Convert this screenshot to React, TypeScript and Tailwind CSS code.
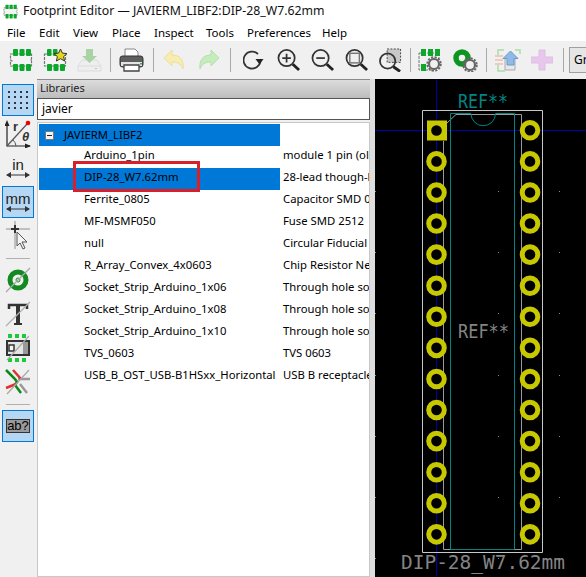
import type { ReactNode } from 'react'

const rows = [
  { name: 'Arduino_1pin', desc: 'module 1 pin (ols)' },
  { name: 'DIP-28_W7.62mm', desc: '28-lead though-hole mounted', selected: true },
  { name: 'Ferrite_0805', desc: 'Capacitor SMD 0805, reflow' },
  { name: 'MF-MSMF050', desc: 'Fuse SMD 2512' },
  { name: 'null', desc: 'Circular Fiducial' },
  { name: 'R_Array_Convex_4x0603', desc: 'Chip Resistor Network' },
  { name: 'Socket_Strip_Arduino_1x06', desc: 'Through hole socket' },
  { name: 'Socket_Strip_Arduino_1x08', desc: 'Through hole socket' },
  { name: 'Socket_Strip_Arduino_1x10', desc: 'Through hole socket' },
  { name: 'TVS_0603', desc: 'TVS 0603' },
  { name: 'USB_B_OST_USB-B1HSxx_Horizontal', desc: 'USB B receptacle' },
]

const menus = [
  { label: 'File', width: 'w-[32px]' },
  { label: 'Edit', width: 'w-[34px]' },
  { label: 'View', width: 'w-[39px]' },
  { label: 'Place', width: 'w-[42px]' },
  { label: 'Inspect', width: 'w-[52px]' },
  { label: 'Tools', width: 'w-[41px]' },
  { label: 'Preferences', width: 'w-[75px]' },
  { label: 'Help', width: 'w-[30px]' },
]

function Chip({ size = 24 }: { size?: number }) {
  return (
    <svg width={size} height={size} viewBox="0 0 24 24" className="block">
      <path d="M1.500 6h21v5l-1 1 1 1v5h-21v-4l1.500-1-1.500-1z" fill="#f4f4f4" stroke="#777" strokeWidth="1.200" strokeDasharray="3 1" />
      {[4, 10.500, 17].map(x => (
        <g key={x}>
          <rect x={x} y="1" width="5" height="7" rx="1" fill="#0ba82c" />
          <rect x={x} y="16" width="5" height="7" rx="1" fill="#0ba82c" />
        </g>
      ))}
    </svg>
  )
}

function Gear({ x, y }: { x: number; y: number }) {
  return (
    <g transform={`translate(${x} ${y})`}>
      <circle r="5" fill="#f0f0f0" stroke="#666" strokeWidth="2.200" />
      <circle r="6.800" fill="none" stroke="#666" strokeWidth="1.800" strokeDasharray="2.200 1.400" />
      <circle r="2" fill="#f0f0f0" />
    </g>
  )
}

function Magnifier({ children }: { children?: ReactNode }) {
  return (
    <svg width="23" height="24" viewBox="0 0 24 24" fill="none" className="block">
      <circle cx="10" cy="10" r="8.500" stroke="#333" strokeWidth="1.800" />
      <path d="M16.500 16.500L23 22.500" stroke="#222" strokeWidth="3" />
      {children}
    </svg>
  )
}

function TopToolbar() {
  return (
    <div className="h-[38px] bg-[#f0f0f0] flex items-center pl-[9px] shrink-0 overflow-hidden">
      <div className="w-[24px] shrink-0"><Chip /></div>
      <div className="w-[24px] shrink-0 ml-[10px]">
        <svg width="24" height="24" viewBox="0 0 24 24" className="block">
          <path d="M1.500 6h21v12h-21z" fill="#f4f4f4" stroke="#777" strokeWidth="1.200" strokeDasharray="3 1" />
          {[4, 10.500, 17].map(x => <rect key={x} x={x} y="16" width="5" height="7" rx="1" fill="#0ba82c" />)}
          {[4, 10].map(x => <rect key={x} x={x} y="1" width="4.500" height="7" rx="1" fill="#0ba82c" />)}
          <path d="M17.500 1l1.900 4.100 4.600.5-3.400 3 1 4.400-4.100-2.300-4.100 2.300 1-4.400-3.400-3 4.600-.5z" fill="#e5d81a" stroke="#333" strokeWidth="1" />
        </svg>
      </div>
      <div className="w-[25px] shrink-0 ml-[10px]">
        <svg width="25" height="24" viewBox="0 0 25 24" className="block">
          <path d="M5 12h15l4 6v5H1v-5z" fill="#eeeeee" stroke="#dcdcdc" />
          <path d="M1 18h23" stroke="#dcdcdc" />
          <path d="M9 1h7v7h4l-7.500 7L5 8h4z" fill="#a9d3a5" />
          <rect x="18" y="20" width="2" height="1" fill="#a9d3a5" />
        </svg>
      </div>
      <div className="w-px h-[24px] bg-[#a8a8a8] ml-[8px] shrink-0" />
      <div className="w-[24px] shrink-0 ml-[8px]">
        <svg width="25" height="24" viewBox="0 0 25 24" className="block">
          <path d="M6 10V1h10l3 3v6z" fill="#fff" stroke="#888" />
          <rect x="1" y="8" width="23" height="11" rx="2.500" fill="#5e5e5e" stroke="#333" />
          <rect x="2" y="14" width="21" height="4" fill="#e4e4e4" />
          <path d="M5 17h15v6H5z" fill="#fff" stroke="#444" strokeWidth="1.300" />
          <rect x="21" y="15" width="2" height="1.500" fill="#2cb34a" />
        </svg>
      </div>
      <div className="w-px h-[24px] bg-[#a8a8a8] ml-[10px] shrink-0" />
      <div className="w-[22px] shrink-0 ml-[9px]">
        <svg width="22" height="24" viewBox="0 0 22 24" className="block">
          <path d="M1 10l8-8v5c8 0 12 5 11 14-2-5-5-7-11-7v4z" fill="#f7edb0" stroke="#eadf9c" />
        </svg>
      </div>
      <div className="w-[22px] shrink-0 ml-[13px]">
        <svg width="22" height="24" viewBox="0 0 22 24" className="block">
          <path d="M21 10l-8-8v5C5 7 1 12 2 21c2-5 5-7 11-7v4z" fill="#c5ecbc" stroke="#b5e0ac" />
        </svg>
      </div>
      <div className="w-px h-[24px] bg-[#a8a8a8] ml-[10px] shrink-0" />
      <div className="w-[20px] shrink-0 ml-[12px]">
        <svg width="21" height="22" viewBox="0 0 21 22" fill="none" className="block">
          <path d="M15 5a8.500 8.500 0 1 0 2.500 7" stroke="#333" strokeWidth="1.800" />
          <path d="M12.500 10h8l-4 5.500z" fill="#222" />
        </svg>
      </div>
      <div className="w-[23px] shrink-0 ml-[14px]">
        <Magnifier><path d="M5.500 10h9M10 5.500v9" stroke="#333" strokeWidth="1.800" /></Magnifier>
      </div>
      <div className="w-[23px] shrink-0 ml-[11px]">
        <Magnifier><path d="M5.500 10h9" stroke="#333" strokeWidth="1.800" /></Magnifier>
      </div>
      <div className="w-[23px] shrink-0 ml-[11px]">
        <Magnifier><rect x="5" y="5" width="10" height="10" stroke="#777" strokeWidth="1.500" /></Magnifier>
      </div>
      <div className="w-[23px] shrink-0 ml-[11px]">
        <svg width="23" height="24" viewBox="0 0 24 24" fill="none" className="block">
          <rect x="8.500" y="0.500" width="14" height="14" fill="#c8c8c8" stroke="#444" strokeDasharray="2 1.500" />
          <circle cx="9" cy="13" r="8" stroke="#333" strokeWidth="1.800" />
          <path d="M15 19l7 5" stroke="#222" strokeWidth="3" />
        </svg>
      </div>
      <div className="w-px h-[24px] bg-[#a8a8a8] ml-[8px] shrink-0" />
      <div className="w-[25px] shrink-0 ml-[7px]">
        <svg width="25" height="24" viewBox="0 0 25 24" className="block">
          <path d="M1 5h20v7H16v10H1z" fill="#f0f0f0" stroke="#777" strokeDasharray="3 1" />
          <rect x="3" y="1" width="5" height="7" fill="#0ba82c" />
          <rect x="10" y="1" width="5" height="7" fill="#0ba82c" />
          <rect x="17" y="1" width="5" height="7" fill="#0ba82c" />
          <rect x="3" y="16" width="5" height="7" fill="#0ba82c" />
          <Gear x={16} y={16} />
        </svg>
      </div>
      <div className="w-[25px] shrink-0 ml-[10px]">
        <svg width="25" height="24" viewBox="0 0 25 24" className="block">
          <circle cx="9" cy="10" r="6" fill="none" stroke="#0c961f" strokeWidth="5.500" />
          <Gear x={17} y={17} />
        </svg>
      </div>
      <div className="w-px h-[24px] bg-[#a8a8a8] ml-[8px] shrink-0" />
      <div className="w-[26px] shrink-0 ml-[8px]">
        <svg width="26" height="24" viewBox="0 0 26 24" fill="none" className="block">
          <path d="M3 7V2h6M20 2h5v4M3 17v6h7" stroke="#a8dca8" strokeWidth="1.500" />
          <path d="M0 8h8M0 12h8M0 16h8" stroke="#eca58f" strokeWidth="1.200" />
          <path d="M10 10h10v12H10z" fill="#e8e8e8" stroke="#aaa" />
          <path d="M15.500 3l7.500 7.500h-4v6.500h-7v-6.500H8z" fill="#8fb9e6" stroke="#6a9bd0" />
        </svg>
      </div>
      <div className="w-[22px] shrink-0 ml-[10px]">
        <svg width="22" height="24" viewBox="0 0 22 24" className="block">
          <path d="M8 2h6v7h8v6h-8v7H8v-7H0V9h8z" fill="#e7c8ec" stroke="#dcbfe2" />
        </svg>
      </div>
      <div className="w-px h-[24px] bg-[#a8a8a8] ml-[10px] shrink-0" />
      <div className="ml-[5px] h-[26px] w-[40px] border border-[#a0a0a0] bg-[#e6e6e6] pl-[4px] text-[12px] leading-[24px] text-black shrink-0">Gr</div>
    </div>
  )
}

function Arrow() {
  return (
    <svg width="24" height="6" viewBox="0 0 24 6" className="block">
      <path d="M1 3h22" stroke="#333" />
      <path d="M0 3l5-3v6zM24 3l-5-3v6z" fill="#333" />
    </svg>
  )
}

function LeftToolbar() {
  const btn = 'w-[32px] h-[32px] flex items-center justify-center border border-transparent shrink-0'
  const on = 'w-[32px] h-[32px] flex items-center justify-center border border-[#0078d7] bg-[#b5d7f3] shrink-0'
  return (
    <div className="w-[37px] shrink-0 bg-[#f0f0f0] flex flex-col items-center gap-[2px] pt-[5px] pr-[1px]">
      <div className={on}>
        <svg width="22" height="22" viewBox="0 0 22 22">
          {[2, 8, 14, 20].map(x => [3, 8, 14, 19].map(y => <rect key={`${x}-${y}`} x={x - 1} y={y - 1} width="2" height="2" fill="#334" />))}
        </svg>
      </div>
      <div className={btn}>
        <svg width="26" height="28" viewBox="0 0 26 28" fill="none">
          <path d="M2 3v23h23" stroke="#222" strokeWidth="1.200" />
          <path d="M2 0l-2.500 6h5zM26 26l-6-2.500v5z" fill="#222" />
          <path d="M2 26L22 4" stroke="#555" strokeWidth="1.200" />
          <path d="M11 26a9 9 0 0 0-3-6" stroke="#555" />
          <circle cx="23" cy="3" r="2.300" fill="#f00000" />
          <text x="8" y="11" fontFamily="Liberation Sans, sans-serif" fontSize="13" fontWeight="700" fill="#333">r</text>
          <text x="17" y="21" fontFamily="Liberation Sans, sans-serif" fontSize="13" fontWeight="700" fontStyle="italic" fill="#333">θ</text>
        </svg>
      </div>
      <div className={`${btn} flex-col`}>
        <span className="text-[15px] leading-[15px] text-[#222] font-['Liberation_Sans',sans-serif] mt-[-2px]">in</span>
        <Arrow />
      </div>
      <div className={`${on} flex-col`}>
        <span className="text-[15px] leading-[15px] text-[#222] font-['Liberation_Sans',sans-serif] mt-[-2px]">mm</span>
        <Arrow />
      </div>
      <div className={btn}>
        <svg width="26" height="30" viewBox="0 0 26 30" fill="none">
          <path d="M1 8h24M10 0v28" stroke="#b0b0b0" strokeWidth="1.500" />
          <path d="M6 8h8M10 4v8" stroke="#333" strokeWidth="2" />
          <path d="M12 11v14l3-3 3 6 2-1-3-6h5z" fill="#f4f4f4" stroke="#555" />
        </svg>
      </div>
      <div className="w-[24px] h-[8px] flex items-center shrink-0"><div className="w-full h-px bg-[#b0b0b0]" /></div>
      <div className={btn}>
        <svg width="26" height="26" viewBox="0 0 26 26" fill="none">
          <circle cx="13" cy="13" r="8" stroke="#128a20" strokeWidth="5" />
          <circle cx="13" cy="13" r="2" stroke="#128a20" />
          <path d="M1 25L25 1" stroke="#a8a8a8" strokeWidth="1.200" />
        </svg>
      </div>
      <div className={btn}>
        <svg width="26" height="26" viewBox="0 0 26 26" fill="none">
          <path d="M4 8V4h18v4" stroke="#333" strokeWidth="2.500" />
          <path d="M13 4v18" stroke="#333" strokeWidth="4" />
          <path d="M9 23h8" stroke="#333" strokeWidth="2" />
          <path d="M1 25L25 1" stroke="#b0b0b0" strokeWidth="1.200" />
        </svg>
      </div>
      <div className={btn}>
        <svg width="26" height="28" viewBox="0 0 26 28" fill="none">
          {[3, 10, 17].map(x => <rect key={x} x={x} y="0" width="4" height="4" fill="#1bc93a" />)}
          {[3, 10, 17].map(x => <rect key={x} x={x} y="24" width="4" height="4" fill="#1bc93a" />)}
          <rect x="2" y="7" width="22" height="14" fill="#e4e4e4" stroke="#333" strokeWidth="2" />
          <rect x="18" y="8" width="5" height="12" fill="#999" />
          <rect x="4" y="11" width="5" height="6" fill="#f4f4f4" stroke="#333" strokeWidth="1.500" />
          <path d="M2 26L24 2" stroke="#aaa" strokeWidth="1.200" />
        </svg>
      </div>
      <div className={btn}>
        <svg width="26" height="26" viewBox="0 0 26 26" fill="none">
          <path d="M13 10h12M15 15l7 9" stroke="#999" strokeWidth="2.500" />
          <path d="M1 1l9 9 2 3-2 3 6 8" stroke="#0b8a1c" strokeWidth="2.500" />
          <path d="M8 1l8 9M1 19l10-4" stroke="#e03030" strokeWidth="2.500" />
          <path d="M2 25L24 1" stroke="#a8a8a8" strokeWidth="1.200" />
        </svg>
      </div>
      <div className="w-[24px] h-[8px] flex items-center shrink-0"><div className="w-full h-px bg-[#b0b0b0]" /></div>
      <div className={on}>
        <span className="w-[24px] h-[14px] bg-[#9a9a9a] border border-[#333] text-[13px] leading-[12px] text-black text-center font-['Liberation_Sans',sans-serif]">ab?</span>
      </div>
    </div>
  )
}

function LibraryPanel() {
  return (
    <div className="w-[333px] shrink-0 flex flex-col min-h-0 border-t border-[#8a8a8a] bg-[#f0f0f0]">
      <div className="h-[18px] pl-[3px] text-[11px] leading-[16px] text-[#222] bg-gradient-to-b from-[#dcdcdc] to-[#bdbdbd]">Libraries</div>
      <div className="h-[22px] border border-[#555] bg-white pl-[4px] text-[12px] leading-[20px] text-black shrink-0">javier</div>
      <div className="relative flex-1 mt-[2px] border border-[#c8c8c8] bg-white pt-[1px] pl-[1px] overflow-hidden text-[11.3px] leading-[18px]">
        <div className="flex h-[22px]">
          <div className="w-[241px] bg-[#0078d7] flex items-center pl-[6px] shrink-0">
            <span className="w-[9px] h-[9px] border border-[#777] bg-[#f4f4f4] flex items-center justify-center">
              <span className="w-[5px] h-px bg-[#222]" />
            </span>
            <span className="ml-[10px] text-black">JAVIERM_LIBF2</span>
          </div>
        </div>
        {rows.map(row => (
          <div key={row.name} className="flex h-[22px] whitespace-nowrap">
            <div className={`w-[241px] pl-[45px] shrink-0 ${row.selected ? 'bg-[#0078d7]' : ''}`}>{row.name}</div>
            <div className="pl-[3px] overflow-hidden">{row.desc}</div>
          </div>
        ))}
        <div className="absolute left-[35px] top-[38px] w-[127px] h-[31px] border-[3px] border-[#d9202a]" />
      </div>
    </div>
  )
}

function Canvas() {
  const pins = Array.from({ length: 14 }, (_, i) => 130.3 + i * 31.08)
  const dotX = [0, 123, 184]
  const dotY = [130, 191, 252, 313, 375, 436, 497, 558]
  return (
    <div className="flex-1 bg-black min-w-0">
      <svg width="211" height="498" viewBox="375 79 211 498" fill="none" className="block">
        {dotY.flatMap(y => dotX.map(x => <rect key={`${x}-${y}`} x={375 + x} y={y} width="1" height="1" fill="#888" />))}
        <path d="M375 130.500H586M436.500 79V577" stroke="#0000a8" />
        <path d="M422.500 110.500H542.500V552.500H422.500Z" stroke="#c8c8c8" />
        <path d="M447 123L456 114.500H521.500V549.500H443.500V141" stroke="#9a9a9a" />
        <path d="M450.500 549.500V113.500H471A12.200 12.200 0 0 0 495.500 113.500H514.500V549.500Z" stroke="#008484" />
        <rect x="427" y="120.500" width="20" height="20" fill="#c8c800" />
        <circle cx="436.500" cy="130.500" r="5.300" fill="#000" />
        {pins.slice(1).map(y => (
          <circle key={y} cx="436.500" cy={y} r="7.800" fill="#000" stroke="#c8c800" strokeWidth="5" />
        ))}
        {pins.map(y => (
          <circle key={y} cx="530" cy={y} r="7.800" fill="#000" stroke="#c8c800" strokeWidth="5" />
        ))}
        <text x="458" y="108" fontFamily="DejaVu Sans Mono, monospace" fontSize="19" fill="#008484" textLength="50" lengthAdjust="spacingAndGlyphs">REF**</text>
        <text x="458" y="338" fontFamily="DejaVu Sans Mono, monospace" fontSize="19" fill="#848484" textLength="51" lengthAdjust="spacingAndGlyphs">REF**</text>
        <text x="401" y="569" fontFamily="DejaVu Sans Mono, monospace" fontSize="19" fill="#848484" textLength="164" lengthAdjust="spacingAndGlyphs">DIP-28_W7.62mm</text>
      </svg>
    </div>
  )
}

export default function App() {
  return (
    <div className="w-[586px] h-[577px] overflow-hidden bg-white flex flex-col text-[12px] text-black font-['Noto_Sans','Open_Sans',sans-serif]">
      <div className="h-[22px] flex items-center shrink-0">
        <div className="ml-[3px] w-[16px] h-[15px]"><Chip size={15} /></div>
        <span className="ml-[4px] text-[12.3px] text-[#111] leading-none">Footprint Editor — JAVIERM_LIBF2:DIP-28_W7.62mm</span>
      </div>
      <div className="h-[19px] flex items-center pl-[7px] shrink-0 leading-none text-[11.5px] pt-[2px]">
        {menus.map(m => <span key={m.label} className={m.width}>{m.label}</span>)}
      </div>
      <TopToolbar />
      <div className="flex flex-1 min-h-0">
        <LeftToolbar />
        <LibraryPanel />
        <div className="w-[5px] shrink-0 bg-[#dedede]" />
        <Canvas />
      </div>
    </div>
  )
}
